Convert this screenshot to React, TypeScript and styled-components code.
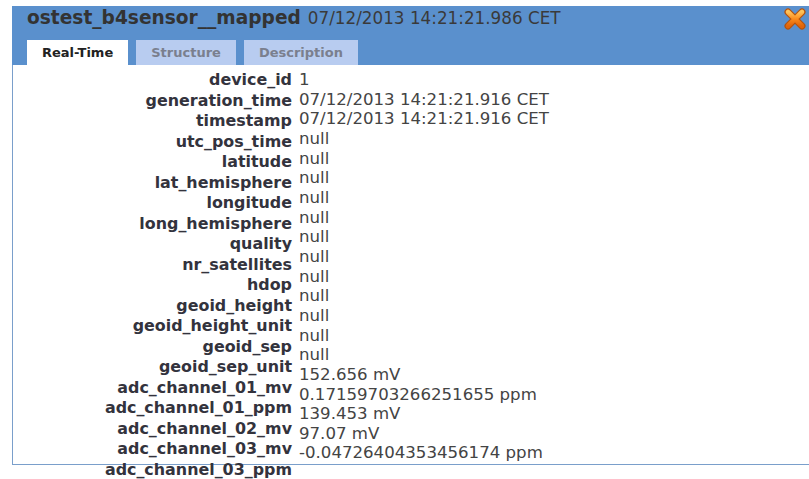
import styled, { createGlobalStyle } from "styled-components";

const GlobalStyle = createGlobalStyle`
    html {
        overflow: hidden;
    }
    body {
        margin: 0;
        padding: 0;
        background: #ffffff;
        font-family: "DejaVu Sans", Verdana, sans-serif;
    }
    #root {
        min-height: 100vh;
    }
`;

const fields: string[] = [
    "device_id",
    "generation_time",
    "timestamp",
    "utc_pos_time",
    "latitude",
    "lat_hemisphere",
    "longitude",
    "long_hemisphere",
    "quality",
    "nr_satellites",
    "hdop",
    "geoid_height",
    "geoid_height_unit",
    "geoid_sep",
    "geoid_sep_unit",
    "adc_channel_01_mv",
    "adc_channel_01_ppm",
    "adc_channel_02_mv",
    "adc_channel_03_mv",
    "adc_channel_03_ppm",
];

const values: string[] = [
    "1",
    "07/12/2013 14:21:21.916 CET",
    "07/12/2013 14:21:21.916 CET",
    "null",
    "null",
    "null",
    "null",
    "null",
    "null",
    "null",
    "null",
    "null",
    "null",
    "null",
    "null",
    "152.656 mV",
    "0.17159703266251655 ppm",
    "139.453 mV",
    "97.07 mV",
    "-0.04726404353456174 ppm",
];

const tabs = ["Real-Time", "Structure", "Description"];

const CloseIcon = () => (
    <svg width="22" height="22" viewBox="0 0 22 22">
        <defs>
            <linearGradient id="xfill" x1="0" y1="0" x2="0" y2="1">
                <stop offset="0" stopColor="#ffc35a" />
                <stop offset="0.5" stopColor="#f98a1c" />
                <stop offset="1" stopColor="#e0640a" />
            </linearGradient>
        </defs>
        <g strokeLinecap="round">
            <path d="M4 4 L18 18 M18 4 L4 18" stroke="#b4520c" strokeWidth="7" />
            <path d="M4 4 L18 18 M18 4 L4 18" stroke="url(#xfill)" strokeWidth="4.6" />
        </g>
    </svg>
);

const App = () => {
    return (
        <>
            <GlobalStyle />
            <Dialog>
                <Header>
                    <TitleRow>
                        <Title>ostest_b4sensor__mapped</Title>
                        <Stamp>07/12/2013 14:21:21.986 CET</Stamp>
                        <CloseBtn><CloseIcon /></CloseBtn>
                    </TitleRow>
                    <TabBar>
                        {tabs.map((t, i) => (
                            <Tab key={t} active={i === 0}>{t}</Tab>
                        ))}
                    </TabBar>
                </Header>
                <Panel>
                    <Fields>
                        <Labels>
                            {fields.map(f => <Label key={f}>{f}</Label>)}
                        </Labels>
                        <Values>
                            {values.map((v, i) => <Value key={i}>{v}</Value>)}
                        </Values>
                    </Fields>
                </Panel>
            </Dialog>
        </>
    );
};
export default App;

const Dialog = styled.div`
    display: flex;
    flex-direction: column;
    width: 800px;
    margin: 6px 0 0 12px;
`;

const Header = styled.div`
    display: flex;
    flex-direction: column;
    background: #5a90cd;
`;

const TitleRow = styled.div`
    display: flex;
    align-items: baseline;
    height: 34px;
    padding: 0 6px 0 15px;
    line-height: 24px;
    color: #333333;
`;

const Title = styled.span`
    font-size: 18.6px;
    font-weight: bold;
`;

const Stamp = styled.span`
    font-size: 16.8px;
    margin-left: 7px;
    color: #3a3a3a;
`;

const CloseBtn = styled.span`
    display: flex;
    align-self: flex-start;
    margin: 2px 0 0 auto;
    cursor: pointer;
`;

const TabBar = styled.div`
    display: flex;
    gap: 8px;
    padding-left: 15px;
`;

const Tab = styled.div<{ active: boolean }>`
    display: flex;
    align-items: center;
    height: 25px;
    padding: 0 15px;
    font-size: 13px;
    font-weight: bold;
    background: ${({ active }) => (active ? "#ffffff" : "#b8ccf0")};
    color: ${({ active }) => (active ? "#222222" : "#7a7f8e")};
    cursor: pointer;
`;

const Panel = styled.div`
    height: 400px;
    box-sizing: border-box;
    padding-top: 5px;
    border-left: 1px solid #7a9fcb;
    border-bottom: 1px solid #7a9fcb;
`;

const Fields = styled.div`
    display: grid;
    grid-template-columns: 279px 1fr;
    column-gap: 7px;
    align-items: start;
`;

const Labels = styled.div`
    display: flex;
    flex-direction: column;
    align-items: flex-end;
`;

const Label = styled.div`
    font-size: 15.9px;
    font-weight: bold;
    line-height: 20.5px;
    color: #33333d;
    white-space: nowrap;
`;

const Values = styled.div`
    display: flex;
    flex-direction: column;
`;

const Value = styled.div`
    font-size: 16.6px;
    line-height: 19.65px;
    color: #444444;
    white-space: nowrap;
`;
